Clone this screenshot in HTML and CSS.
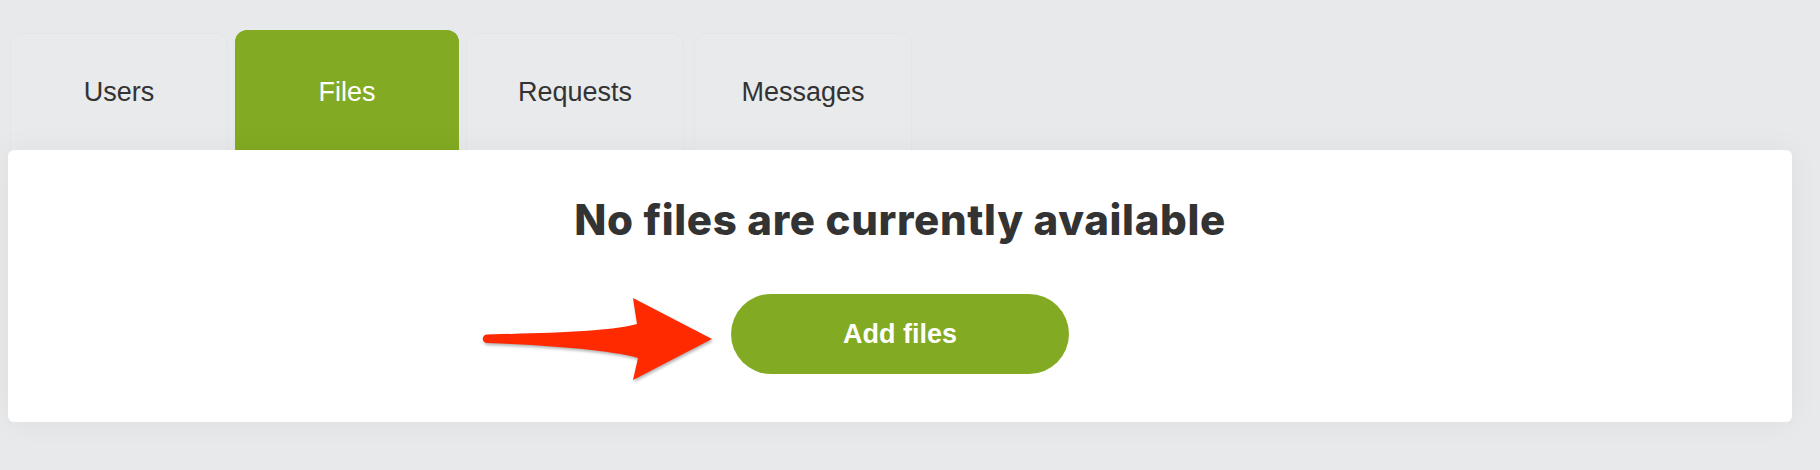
FILE: index.html
```html
<!DOCTYPE html>
<html>
<head>
<meta charset="utf-8">
<link rel="stylesheet" href="styles.css">
</head>
<body>
<div class="page">
  <nav class="tabs">
    <div class="tab">Users</div>
    <div class="tab tab-active">Files</div>
    <div class="tab">Requests</div>
    <div class="tab">Messages</div>
  </nav>
  <section class="panel">
    <h1 class="empty-title">No files are currently available</h1>
    <div class="cta">
      <svg class="arrow" width="240" height="92" viewBox="0 0 240 92" xmlns="http://www.w3.org/2000/svg">
        <path d="M6 40.5 C62 39, 128 38, 156 30 L152 4 L231 45 L152 86 L157 64 C130 56, 62 51, 6 49 A4.25 4.25 0 0 1 6 40.5 Z" fill="#ff2a00"/>
      </svg>
      <button class="add-btn">Add files</button>
    </div>
  </section>
</div>
</body>
</html>
```

FILE: styles.css
```css
* { box-sizing: border-box; }
html, body { margin: 0; padding: 0; }
body {
  background: #e8e9eb;
  font-family: "Liberation Sans", Arial, sans-serif;
  color: #333;
  height: 470px;
  overflow: hidden;
}
.page {
  padding: 33px 28px 0 8px;
}
.tabs {
  display: flex;
  gap: 10px;
  padding-left: 2px;
}
.tab {
  width: 218px;
  height: 117px;
  display: flex;
  align-items: center;
  justify-content: center;
  font-size: 27px;
  color: #333;
  background: #e9eaec;
  border: 1px solid #e4e5e7;
  border-bottom: none;
  border-radius: 12px 12px 0 0;
}
.tab-active {
  background: #82aa22;
  border-color: #82aa22;
  color: #fff;
  margin: -3px -3px 0;
  width: 224px;
  height: 120px;
  padding-top: 3px;
}
.panel {
  position: relative;
  background: #fff;
  border-radius: 6px;
  box-shadow: 0 0 30px rgba(0, 0, 0, 0.05);
  height: 272px;
  display: flex;
  flex-direction: column;
  align-items: center;
  padding-top: 44px;
}
.empty-title {
  margin: 0;
  font-family: "Inter", "Lato", sans-serif;
  font-weight: 800;
  font-size: 42px;
  line-height: 52px;
  letter-spacing: 0.65px;
  color: #333;
}
.cta {
  position: relative;
  margin-top: 48px;
}
.add-btn {
  display: block;
  width: 338px;
  height: 80px;
  border: none;
  border-radius: 40px;
  background: #82aa22;
  color: #fff;
  font-family: "Liberation Sans", Arial, sans-serif;
  font-weight: 700;
  font-size: 27px;
}
.arrow {
  position: absolute;
  right: calc(100% + 10px);
  top: 0;
  filter: drop-shadow(1px 2px 1.5px rgba(0, 0, 0, 0.3));
}
```
